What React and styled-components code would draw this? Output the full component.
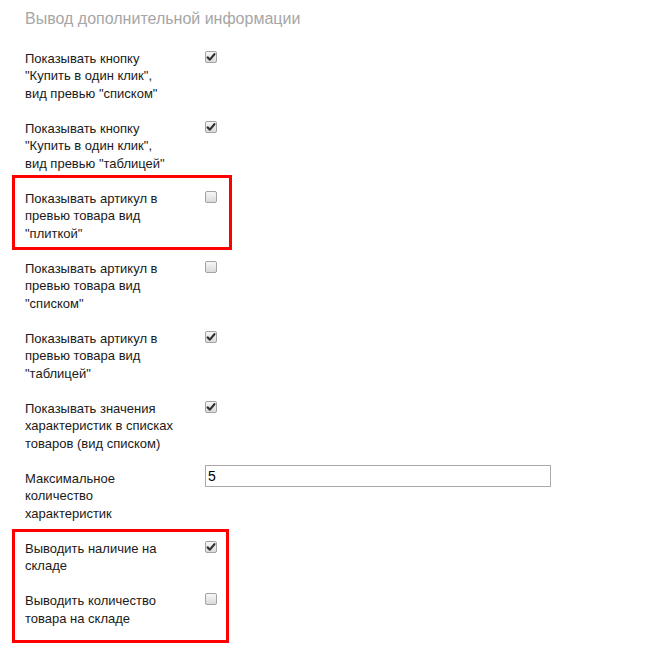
import React from 'react';
import styled, { createGlobalStyle } from 'styled-components';

const GlobalStyle = createGlobalStyle`
  body {
    margin: 0;
    background: #fff;
    font-family: "Liberation Sans", Arial, sans-serif;
  }
`;

const Page = styled.div`
  padding: 9px 0 0 25px;
  width: 636px;
  min-height: 650px;
  box-sizing: border-box;
`;

const Title = styled.div`
  font-size: 16px;
  line-height: 20px;
  color: #a6a6a6;
  margin-bottom: 12px;
`;

const Row = styled.div`
  display: grid;
  grid-template-columns: 180px 1fr;
  padding: 8.75px 0;
  font-size: 13px;
  line-height: 17.5px;
  color: #1a1a1a;
`;

const Label = styled.div`
  padding-right: 4px;
  white-space: nowrap;
`;

const Control = styled.div`
  display: flex;
  align-items: flex-start;
`;

const Highlight = styled.div`
  position: relative;

  &::after {
    content: '';
    position: absolute;
    left: -13px;
    top: ${(p) => p.$top}px;
    width: ${(p) => p.$width}px;
    height: ${(p) => p.$height}px;
    border: 3px solid #ff0000;
    box-sizing: border-box;
    pointer-events: none;
  }
`;

const Box = styled.span`
  width: 12px;
  height: 12px;
  margin-top: 1px;
  box-sizing: border-box;
  border: 1px solid #a3a3a3;
  border-radius: 2px;
  background: linear-gradient(#f7f7f7, #dadada);
  display: flex;
  align-items: center;
  justify-content: center;
`;

const TextInput = styled.input`
  width: 346px;
  height: 22px;
  margin: -5px 0 0;
  box-sizing: border-box;
  border: 1px solid #a9a9a9;
  padding: 1px 2px;
  font-family: "Liberation Sans", Arial, sans-serif;
  font-size: 14px;
  color: #000;
  outline: none;
`;

const Checkbox = ({ checked }) => (
  <Box>
    {checked && (
      <svg width="10" height="10" viewBox="0 0 10 10">
        <path d="M1.6 5.4 L3.9 7.6 L8.4 2.2" fill="none" stroke="#333" strokeWidth="2.2" strokeLinecap="round" strokeLinejoin="round" />
      </svg>
    )}
  </Box>
);

// lines are given one by one, as the original form wraps them
const Option = ({ lines, checked, children }) => (
  <Row>
    <Label>
      {lines.map((line, i) => (
        <React.Fragment key={i}>
          {i > 0 && <br />}
          {line}
        </React.Fragment>
      ))}
    </Label>
    <Control>{children || <Checkbox checked={checked} />}</Control>
  </Row>
);

const App = () => (
  <>
    <GlobalStyle />
    <Page>
      <Title>Вывод дополнительной информации</Title>
      <Option lines={['Показывать кнопку', '"Купить в один клик",', 'вид превью "списком"']} checked />
      <Option lines={['Показывать кнопку', '"Купить в один клик",', 'вид превью "таблицей"']} checked />
      <Highlight $top={-6} $width={220} $height={75}>
        <Option lines={['Показывать артикул в', 'превью товара вид', '"плиткой"']} />
      </Highlight>
      <Option lines={['Показывать артикул в', 'превью товара вид', '"списком"']} />
      <Option lines={['Показывать артикул в', 'превью товара вид', '"таблицей"']} checked />
      <Option lines={['Показывать значения', 'характеристик в списках', 'товаров (вид списком)']} checked />
      <Option lines={['Максимальное', 'количество', 'характеристик']}>
        <TextInput defaultValue="5" />
      </Option>
      <Highlight $top={-2} $width={217} $height={114}>
        <Option lines={['Выводить наличие на', 'складе']} checked />
        <Option lines={['Выводить количество', 'товара на складе']} />
      </Highlight>
    </Page>
  </>
);

export default App;
